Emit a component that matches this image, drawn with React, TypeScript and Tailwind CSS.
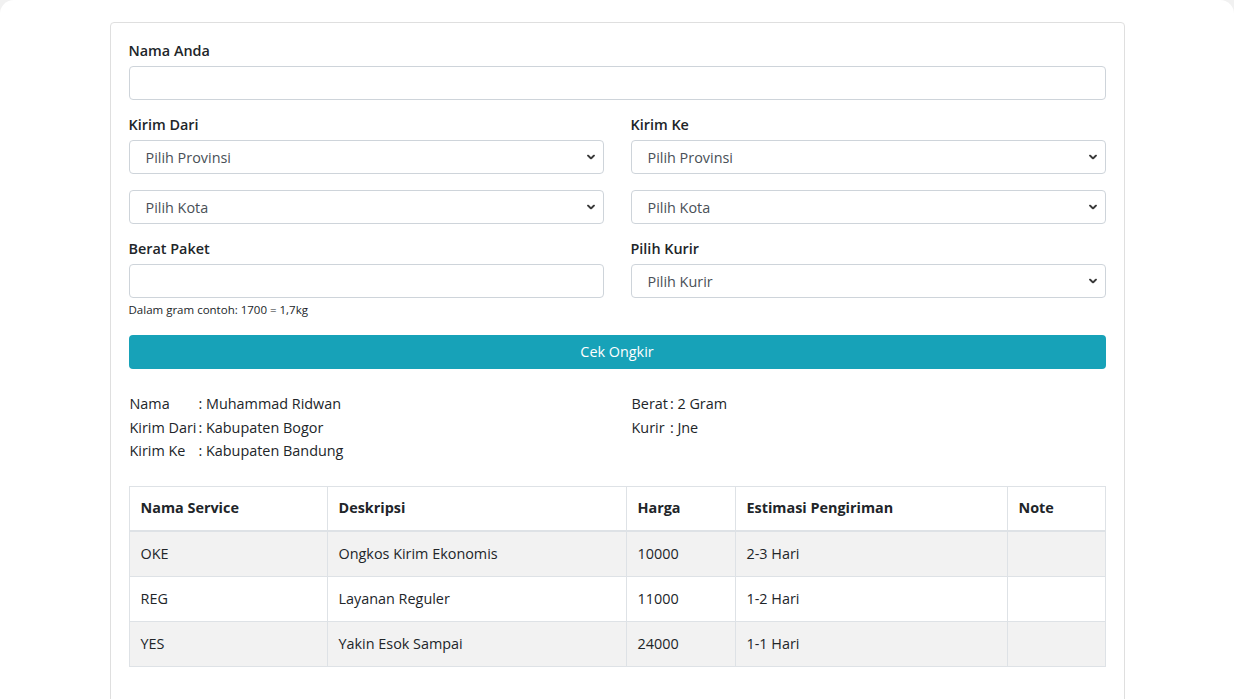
import { ChangeEvent, useState } from "react";

const font = "font-['Open_Sans','Noto_Sans',sans-serif]";

function Chevron() {
  return (
    <svg
      className="pointer-events-none absolute right-[9px] top-1/2 h-[5px] w-[8px] -translate-y-1/2 text-[#3a3a3a]"
      viewBox="0 0 8 5"
      fill="none"
      stroke="currentColor"
      strokeWidth={1.8}
    >
      <path d="M1 1l3 3 3-3" strokeLinecap="round" strokeLinejoin="round" />
    </svg>
  );
}

function Select({ placeholder }: { placeholder: string }) {
  return (
    <div className="relative">
      <select
        defaultValue=""
        className="h-[34px] w-full appearance-none rounded-[4px] border border-[#ced4da] bg-white pl-[16px] pr-8 pt-[2px] text-[14.4px] text-[#495057] outline-none"
      >
        <option value="">{placeholder}</option>
      </select>
      <Chevron />
    </div>
  );
}

function Label({ children }: { children: string }) {
  return (
    <label className="mb-[4px] block text-[14.4px] font-semibold leading-[22px] text-[#212529]">
      {children}
    </label>
  );
}

const services = [
  { name: "OKE", desc: "Ongkos Kirim Ekonomis", price: "10000", etd: "2-3 Hari" },
  { name: "REG", desc: "Layanan Reguler", price: "11000", etd: "1-2 Hari" },
  { name: "YES", desc: "Yakin Esok Sampai", price: "24000", etd: "1-1 Hari" },
];

export default function App() {
  const [nama, setNama] = useState("");
  const [berat, setBerat] = useState("");

  return (
    <div className={`min-h-screen bg-[#f1f1f1] ${font}`}>
      <div className="min-h-screen rounded-t-[14px] bg-white pt-[22px]">
        <div className="mx-auto min-h-[700px] w-[1015px] rounded-[4px] border border-[#dfdfdf] bg-white px-[18px] pb-[40px] pt-[17px]">
          {/* nama */}
          <div className="mb-[14px]">
            <label className="mb-[4px] block text-[14.4px] font-semibold leading-[22px] text-[#212529]">
              Nama Anda
            </label>
            <input
              type="text"
              value={nama}
              onChange={(e: ChangeEvent<HTMLInputElement>) => setNama(e.target.value)}
              className="h-[34px] w-full rounded-[4px] border border-[#ced4da] bg-white px-[11px] text-[14.4px] text-[#495057] outline-none"
            />
          </div>

          {/* asal / tujuan */}
          <div className="grid grid-cols-2 gap-x-[27px]">
            <div>
              <div className="mb-[14px]">
                <Label>Kirim Dari</Label>
                <Select placeholder="Pilih Provinsi" />
                <div className="mt-[16px]">
                  <Select placeholder="Pilih Kota" />
                </div>
              </div>
              <div className="mb-[17px]">
                <Label>Berat Paket</Label>
                <input
                  type="text"
                  value={berat}
                  onChange={(e: ChangeEvent<HTMLInputElement>) => setBerat(e.target.value)}
                  className="h-[34px] w-full rounded-[4px] border border-[#ced4da] bg-white px-[11px] text-[14.4px] text-[#495057] outline-none"
                />
                <p className="mt-[3px] text-[11.5px] leading-[17px] text-[#212529]">
                  Dalam gram contoh: 1700 = 1,7kg
                </p>
              </div>
            </div>
            <div>
              <div className="mb-[14px]">
                <Label>Kirim Ke</Label>
                <Select placeholder="Pilih Provinsi" />
                <div className="mt-[16px]">
                  <Select placeholder="Pilih Kota" />
                </div>
              </div>
              <div>
                <Label>Pilih Kurir</Label>
                <Select placeholder="Pilih Kurir" />
              </div>
            </div>
          </div>

          <button className="h-[34px] w-full rounded-[4px] bg-[#17a2b8] text-[14.4px] text-white">
            Cek Ongkir
          </button>

          {/* hasil */}
          <div className="mt-[23px] grid grid-cols-2 items-start gap-x-[27px] text-[14.4px] leading-[23.5px] text-[#212529]">
            <div>
              <table>
                <tbody>
                  <tr>
                    <td className="pl-px pr-[2px]">Nama</td>
                    <td>: Muhammad Ridwan</td>
                  </tr>
                  <tr>
                    <td className="pl-px pr-[2px]">Kirim Dari</td>
                    <td>: Kabupaten Bogor</td>
                  </tr>
                  <tr>
                    <td className="pl-px pr-[2px]">Kirim Ke</td>
                    <td>: Kabupaten Bandung</td>
                  </tr>
                </tbody>
              </table>
            </div>
            <div>
              <table>
                <tbody>
                  <tr>
                    <td className="pl-px pr-[2px]">Berat</td>
                    <td>: 2 Gram</td>
                  </tr>
                  <tr>
                    <td className="pl-px pr-[2px]">Kurir</td>
                    <td>: Jne</td>
                  </tr>
                </tbody>
              </table>
            </div>
          </div>

          {/* tabel ongkir */}
          <table className="mt-[23px] w-full table-fixed border-collapse text-[14.4px] text-[#212529]">
            <colgroup>
              <col className="w-[198px]" />
              <col className="w-[299px]" />
              <col className="w-[109px]" />
              <col className="w-[272px]" />
              <col />
            </colgroup>
            <thead>
              <tr>
                {["Nama Service", "Deskripsi", "Harga", "Estimasi Pengiriman", "Note"].map((h) => (
                  <th
                    key={h}
                    className="h-[45px] border border-b-2 border-[#dee2e6] px-[11px] text-left align-middle font-bold"
                  >
                    {h}
                  </th>
                ))}
              </tr>
            </thead>
            <tbody>
              {services.map((s, i) => (
                <tr key={s.name} className={i % 2 === 0 ? "bg-[#f2f2f2]" : "bg-white"}>
                  <td className="h-[45px] border border-[#dee2e6] px-[11px] align-middle">{s.name}</td>
                  <td className="h-[45px] border border-[#dee2e6] px-[11px] align-middle">{s.desc}</td>
                  <td className="h-[45px] border border-[#dee2e6] px-[11px] align-middle">{s.price}</td>
                  <td className="h-[45px] border border-[#dee2e6] px-[11px] align-middle">{s.etd}</td>
                  <td className="h-[45px] border border-[#dee2e6] px-[11px] align-middle"></td>
                </tr>
              ))}
            </tbody>
          </table>
        </div>
      </div>
    </div>
  );
}
